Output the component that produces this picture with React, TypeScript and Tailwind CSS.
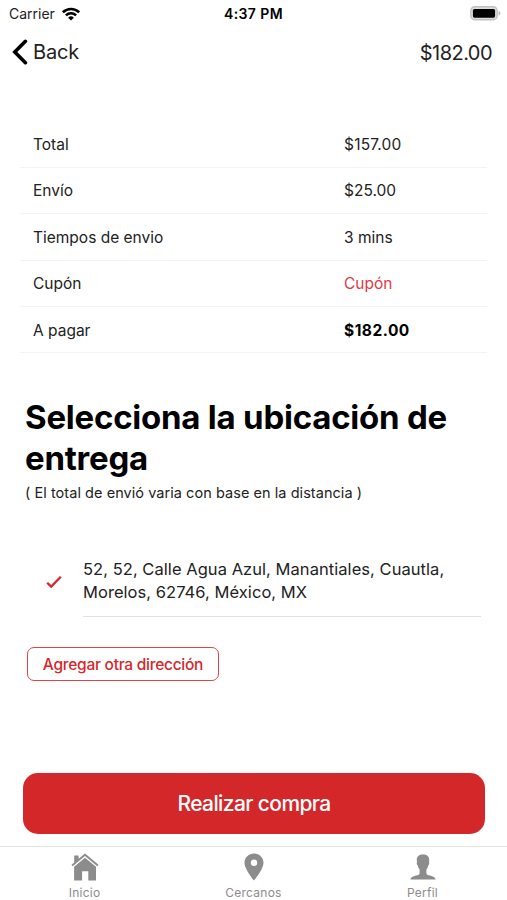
type SummaryRow = {
  label: string;
  value: string;
  valueClass?: string;
};

const summary: SummaryRow[] = [
  { label: "Total", value: "$157.00", valueClass: "tracking-[0.2px]" },
  { label: "Envío", value: "$25.00" },
  { label: "Tiempos de envio", value: "3 mins" },
  { label: "Cupón", value: "Cupón", valueClass: "text-[#dc3a42]" },
  { label: "A pagar", value: "$182.00", valueClass: "font-bold tracking-[0.5px] text-black" },
];

function WifiIcon() {
  return (
    <svg width="18" height="14" viewBox="0 0 18 14" fill="none" stroke="black" strokeWidth="2.6">
      <path d="M0.9 5.3a11.6 11.6 0 0 1 16.2 0" />
      <path d="M3.9 8.4a7.3 7.3 0 0 1 10.2 0" />
      <path d="M9 13.6 6.1 10.7a4.1 4.1 0 0 1 5.8 0Z" fill="black" stroke="none" />
    </svg>
  );
}

function BatteryIcon() {
  return (
    <svg width="31" height="15" viewBox="0 0 31 15">
      <rect x="0.8" y="0.8" width="26.4" height="13" rx="4" fill="#dedede" stroke="#c0c0c0" strokeWidth="1.4" />
      <rect x="2.9" y="2.9" width="22.2" height="8.8" rx="1.6" fill="black" />
      <path d="M28.6 5v4.6c1.1-.4 1.8-1.2 1.8-2.3s-.7-1.9-1.8-2.3Z" fill="#b8b8b8" />
    </svg>
  );
}

function HomeIcon() {
  return (
    <svg width="28" height="28" viewBox="0 0 28 28" fill="#8c8c8c">
      <path d="M14 .6 18.9 4.6 27.5 11.8 26.3 13.3 14 3.1 1.7 13.3.5 11.8 3.2 9.5V2.6h4.4v3.2Z" />
      <path d="M14 4.7 25 13.8V27.6h-7.7v-9.4h-6.2v9.4H3.1V13.8Z" />
    </svg>
  );
}

function PinIcon() {
  return (
    <svg width="20" height="28" viewBox="0 0 20 28" fill="#8c8c8c">
      <path
        fillRule="evenodd"
        d="M10 .6C4.8.6.5 4.6.5 9.8c0 6.7 9.5 17.7 9.5 17.7s9.5-11 9.5-17.7C19.5 4.6 15.2.6 10 .6Zm0 6a3.2 3.2 0 1 1 0 6.4 3.2 3.2 0 0 1 0-6.4Z"
      />
    </svg>
  );
}

function PersonIcon() {
  return (
    <svg width="26" height="28" viewBox="0 0 26 28" fill="#8c8c8c">
      <path d="M13 1.5C9.1 1.5 6.6 3.4 6.8 7.2c0 .9.2 1.5.3 2-.7.4-.5 2.5.8 3.5.3 1.9.9 2.8 1.7 3.7v3.8c0 1.3-1.3 1.7-3.6 2.4C2.6 23.7.7 24.5.5 26.5h25c-.2-2-2.1-2.8-5.5-3.9-2.3-.7-3.6-1.1-3.6-2.4v-3.8c.8-.9 1.4-1.8 1.7-3.7 1.3-1 1.5-3.1.8-3.5.1-.5.3-1.1.3-2C19.4 3.4 16.9 1.5 13 1.5Z" />
    </svg>
  );
}

const tabs = [
  { label: "Inicio", Icon: HomeIcon },
  { label: "Cercanos", Icon: PinIcon },
  { label: "Perfil", Icon: PersonIcon },
];

export default function App() {
  return (
    <div className="flex h-[900px] w-[507px] flex-col overflow-hidden bg-white font-['Inter',sans-serif] text-[#222]">
      {/* Status bar */}
      <div className="grid h-[27px] shrink-0 grid-cols-3 items-center pl-[9px] pr-[6px]">
        <div className="flex items-center gap-[7px]">
          <span className="text-[14px]">Carrier</span>
          <WifiIcon />
        </div>
        <span className="pr-[3px] text-center text-[14px] font-semibold tracking-[0.4px] text-black">4:37 PM</span>
        <div className="flex justify-end">
          <BatteryIcon />
        </div>
      </div>

      {/* Navigation header */}
      <header className="flex h-[50px] shrink-0 items-center justify-between pl-3 pr-[15px] text-[20px]">
        <button className="flex items-center gap-[5px]">
          <svg width="16" height="26" viewBox="0 0 16 26" fill="none" stroke="black" strokeWidth="3.6" strokeLinecap="round">
            <path d="M13.4 2.3 2.8 13l10.6 10.7" />
          </svg>
          <span className="tracking-[-0.2px]">Back</span>
        </button>
        <span className="pt-px tracking-[-0.55px]">$182.00</span>
      </header>

      {/* Order summary */}
      <dl className="mx-5 mt-[44.4px] shrink-0 text-[15.5px]">
        {summary.map((row) => (
          <div key={row.label} className="flex h-[46.4px] items-center border-b border-[#f3f3f3] pt-px pl-[13px]">
            <dt className="w-[311px]">{row.label}</dt>
            <dd className={row.valueClass}>{row.value}</dd>
          </div>
        ))}
      </dl>

      {/* Delivery location */}
      <section className="shrink-0 px-[25px] pt-[43.6px]">
        <h1 className="text-[33px] leading-[41px] font-bold tracking-[-0.23px] whitespace-nowrap text-black">
          Selecciona la ubicación de
          <br />
          entrega
        </h1>
        <p className="mt-[4px] text-[14.5px] leading-5 tracking-[0.05px] whitespace-nowrap">
          ( El total de envió varia con base en la distancia )
        </p>
      </section>

      <div className="mt-[54px] flex shrink-0 items-stretch pr-[26px] pl-[46px]">
        <div className="flex w-[37px] items-center pb-[9px]">
          <svg width="16" height="14" viewBox="0 0 16 14" fill="none" stroke="#d4272e" strokeWidth="2.3">
            <path d="M1.2 7.7 5.2 11.6 14.8 1.8" />
          </svg>
        </div>
        <p className="h-[60px] grow border-b border-[#e2e2e2] pt-px text-[16.5px] leading-[23px] tracking-[0.05px] whitespace-nowrap">
          52, 52, Calle Agua Azul, Manantiales, Cuautla,
          <br />
          Morelos, 62746, México, MX
        </p>
      </div>

      <button className="mt-[30px] ml-[27px] h-[34px] w-[192px] shrink-0 rounded-[7px] border-[1.5px] border-[#d9474b] pt-px text-[15.5px] font-medium tracking-[-0.26px] whitespace-nowrap text-[#d4272a]">
        Agregar otra dirección
      </button>

      <button className="mr-[22px] ml-[23px] mt-auto mb-[12px] h-[61px] shrink-0 rounded-[15px] bg-[#d4272a] pt-px text-[21px] font-medium tracking-[-0.6px] text-white">
        Realizar compra
      </button>

      {/* Tab bar */}
      <nav className="grid h-[54px] shrink-0 grid-cols-3 border-t border-[#e4e4e4] pt-[6px] text-[12px] text-[#8c8c8c]">
        {tabs.map(({ label, Icon }) => (
          <a key={label} className="flex flex-col items-center gap-[4px]">
            <Icon />
            <span className="leading-4 tracking-[0.25px]">{label}</span>
          </a>
        ))}
      </nav>
    </div>
  );
}
